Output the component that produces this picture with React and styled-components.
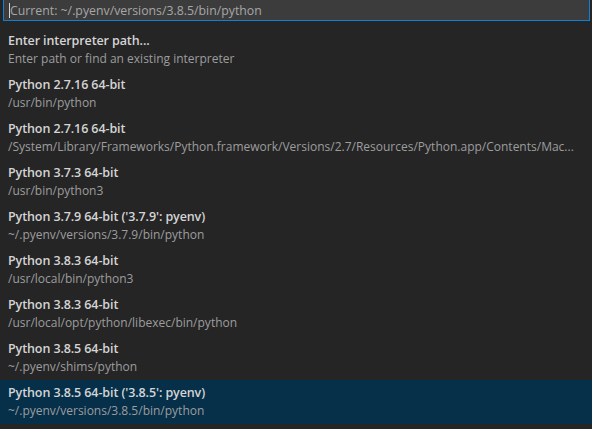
import React from "react";
import styled, { createGlobalStyle } from "styled-components";

const GlobalStyle = createGlobalStyle`
  html, body {
    margin: 0;
    padding: 0;
    background: #252526;
  }
  body {
    font-family: "Open Sans", "Liberation Sans", sans-serif;
    -webkit-font-smoothing: antialiased;
  }
`;

// whole quick pick panel
const Picker = styled.div`
  width: 592px;
  height: 429px;
  background: #252526;
  overflow: hidden;
  display: flex;
  flex-direction: column;
`;

const InputRow = styled.div`
  padding: 0 2px 0 3px;
`;

const InputBox = styled.div`
  height: 20px;
  background: #3c3c3c;
  border: 1px solid #0e80d8;
  border-top: none;
  display: flex;
  align-items: center;
  padding-left: 5px;
  font-size: 12.3px;
  color: #a7a7a7;
`;

const Caret = styled.span`
  display: inline-block;
  width: 1px;
  height: 15px;
  background: #d4d4d4;
`;

const List = styled.div`
  margin-top: 7px;
  display: flex;
  flex-direction: column;
`;

// list item, two lines
const Item = styled.div`
  height: 44px;
  padding: 0 8px;
  display: flex;
  flex-direction: column;
  justify-content: center;
  background: ${(p) => (p.selected ? "#062f4a" : "transparent")};
  white-space: nowrap;
  overflow: hidden;
`;

const Label = styled.div`
  font-size: 12.5px;
  font-weight: 550;
  color: #d4d4d4;
  line-height: 18px;
  letter-spacing: -0.1px;
`;

const Detail = styled.div`
  font-size: 12px;
  color: #9d9d9d;
  line-height: 18px;
  overflow: hidden;
`;

const items = [
  ["Enter interpreter path...", "Enter path or find an existing interpreter"],
  ["Python 2.7.16 64-bit", "/usr/bin/python"],
  [
    "Python 2.7.16 64-bit",
    "/System/Library/Frameworks/Python.framework/Versions/2.7/Resources/Python.app/Contents/Mac...",
  ],
  ["Python 3.7.3 64-bit", "/usr/bin/python3"],
  ["Python 3.7.9 64-bit ('3.7.9': pyenv)", "~/.pyenv/versions/3.7.9/bin/python"],
  ["Python 3.8.3 64-bit", "/usr/local/bin/python3"],
  ["Python 3.8.3 64-bit", "/usr/local/opt/python/libexec/bin/python"],
  ["Python 3.8.5 64-bit", "~/.pyenv/shims/python"],
  ["Python 3.8.5 64-bit ('3.8.5': pyenv)", "~/.pyenv/versions/3.8.5/bin/python"],
];

export default function App() {
  return (
    <Picker>
      <GlobalStyle />
      <InputRow>
        <InputBox>
          <Caret />
          Current: ~/.pyenv/versions/3.8.5/bin/python
        </InputBox>
      </InputRow>
      <List>
        {items.map(([label, detail], i) => (
          <Item key={i} selected={i === items.length - 1}>
            <Label>{label}</Label>
            <Detail>{detail}</Detail>
          </Item>
        ))}
      </List>
    </Picker>
  );
}
